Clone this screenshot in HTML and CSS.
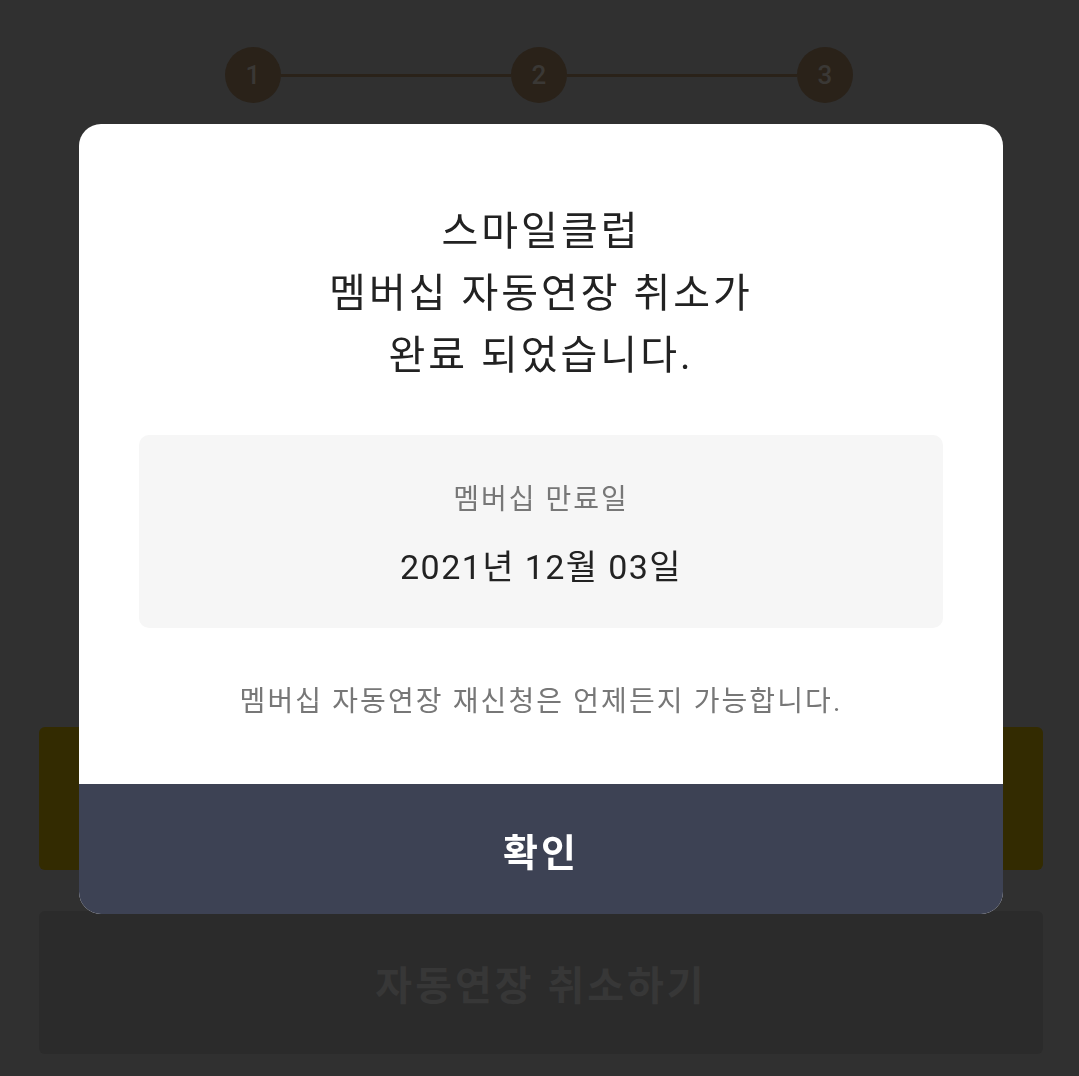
FILE: index.html
```html
<!DOCTYPE html>
<html>
<head>
    <title>스마일클럽 멤버십</title>
    <link rel="stylesheet" href="styles.css">
</head>
<body>
    <div class="page">
        <div class="steps">
            <span class="step">1</span>
            <span class="step-line"></span>
            <span class="step">2</span>
            <span class="step-line"></span>
            <span class="step">3</span>
        </div>

        <div class="actions">
            <button class="btn btn-primary"></button>
            <button class="btn btn-secondary">자동연장 취소하기</button>
        </div>
    </div>

    <div class="dim">
        <div class="modal">
            <div class="modal-body">
                <h2 class="modal-title">스마일클럽<br>멤버십 자동연장 취소가<br>완료 되었습니다.</h2>
                <div class="info-box">
                    <p class="info-label">멤버십 만료일</p>
                    <p class="info-date">2021년 12월 03일</p>
                </div>
                <p class="modal-note">멤버십 자동연장 재신청은 언제든지 가능합니다.</p>
            </div>
            <button class="modal-confirm">확인</button>
        </div>
    </div>
</body>
</html>
```

FILE: styles.css
```css
body {
    margin: 0;
    font-family: Roboto, "Noto Sans CJK KR", sans-serif;
    background-color: #303030;
}

/* page under the dim layer */
.page {
    height: 1076px;
    padding: 47px 36px 0 39px;
    box-sizing: border-box;
}

.steps {
    display: flex;
    align-items: center;
    margin-left: 186px;
    width: 628px;
}

.step {
    width: 56px;
    height: 56px;
    border-radius: 50%;
    background-color: #2a2219;
    color: #3a3835;
    font-size: 26px;
    font-weight: 500;
    display: flex;
    align-items: center;
    justify-content: center;
    flex-shrink: 0;
}

.step-line {
    flex: 1;
    height: 3px;
    background-color: #2a2219;
}

.actions {
    margin-top: 624px;
    display: flex;
    flex-direction: column;
    gap: 41px;
}

.btn {
    height: 143px;
    border: none;
    border-radius: 6px;
    font-family: inherit;
    font-size: 40px;
    font-weight: bold;
    letter-spacing: 3px;
}

.btn-primary {
    background-color: #332b01;
}

.btn-secondary {
    background-color: #2b2b2b;
    color: #373737;
}

/* modal */
.dim {
    position: fixed;
    top: 0;
    left: 0;
    width: 100%;
    height: 100%;
}

.modal {
    position: absolute;
    top: 124px;
    left: 79px;
    width: 924px;
    border-radius: 22px;
    overflow: hidden;
    background-color: #ffffff;
}

.modal-body {
    padding: 77px 60px 62px;
    text-align: center;
}

.modal-title {
    margin: 0;
    font-size: 40px;
    font-weight: normal;
    line-height: 62px;
    letter-spacing: 3px;
    color: #222222;
}

.info-box {
    margin-top: 48px;
    padding: 45px 0 41px;
    background-color: #f6f6f6;
    border-radius: 10px;
}

.info-label {
    margin: 0;
    font-size: 28px;
    line-height: 40px;
    letter-spacing: 2px;
    color: #777777;
}

.info-date {
    margin: 27px 0 0;
    font-size: 34px;
    line-height: 40px;
    letter-spacing: 1.4px;
    color: #222222;
}

.modal-note {
    margin: 54px 0 0;
    font-size: 28px;
    line-height: 40px;
    letter-spacing: 2.1px;
    color: #777777;
}

.modal-confirm {
    display: block;
    width: 100%;
    height: 130px;
    border: none;
    background-color: #3d4254;
    color: #ffffff;
    font-family: inherit;
    font-size: 38px;
    font-weight: bold;
    letter-spacing: 3px;
}
```
